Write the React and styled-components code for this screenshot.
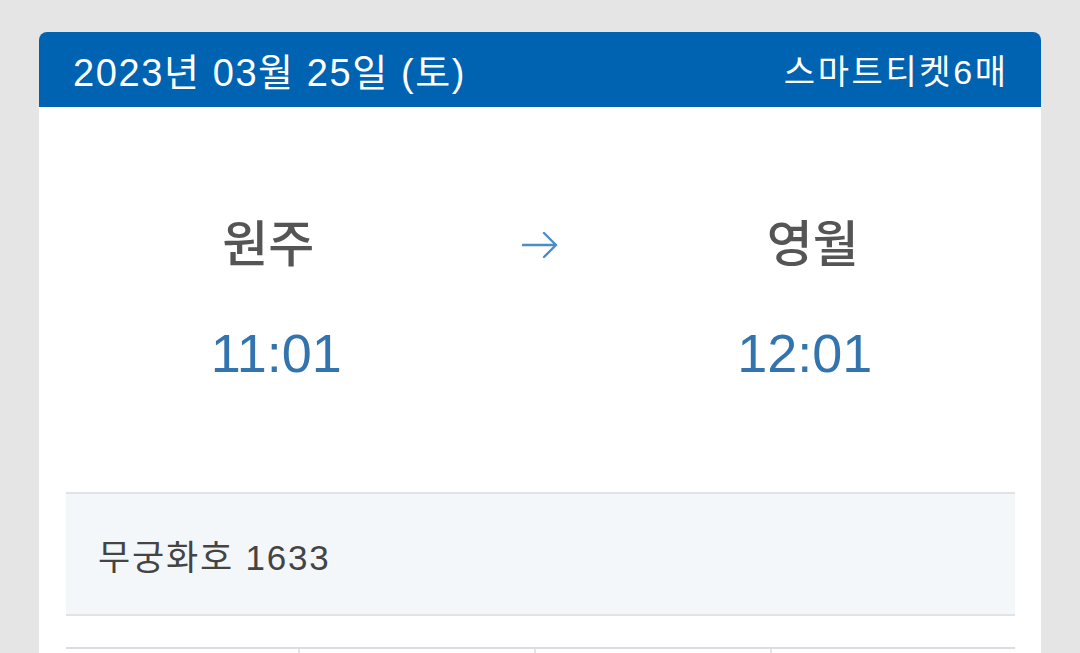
import React from 'react';
import styled, { createGlobalStyle } from 'styled-components';

const GlobalStyle = createGlobalStyle`
  html, body {
    margin: 0;
    padding: 0;
    background: #e5e5e5;
  }
  body {
    font-family: "Liberation Sans", "Noto Sans CJK KR", sans-serif;
  }
`;

const Page = styled.div`
  padding: 32px 39px 0 39px;
  height: 653px;
  box-sizing: border-box;
  overflow: hidden;
`;

const Card = styled.div`
  background: #ffffff;
  border-radius: 8px 8px 0 0;
  overflow: hidden;
  min-height: 640px;
`;

const Header = styled.div`
  height: 75px;
  background: #0063b2;
  color: #ffffff;
  display: flex;
  align-items: center;
  justify-content: space-between;
  padding: 0 35px 0 34px;
`;

const DateText = styled.div`
  font-size: 38px;
  letter-spacing: 1.6px;
`;

const TicketCount = styled.div`
  font-size: 34px;
  letter-spacing: 2.6px;
  margin-right: -2.6px;
`;

const Route = styled.div`
  display: grid;
  grid-template-columns: 1fr 140px 1fr;
  padding: 108px 26px 0 27px;
`;

const Stop = styled.div`
  display: flex;
  flex-direction: column;
  align-items: center;
`;

const StationName = styled.div`
  font-size: 50px;
  line-height: 60px;
  color: #555555;
  font-weight: 500;
`;

const Time = styled.div`
  margin-top: 48px;
  font-size: 54px;
  line-height: 60px;
  color: #3474ae;
  transform: translateX(${(p) => p.$nudge || 0}px);
`;

const ArrowCell = styled.div`
  display: flex;
  justify-content: center;
  height: 60px;
  align-items: center;
  padding-right: 2px;
`;

const TrainPanel = styled.div`
  margin: 109px 26px 0 27px;
  height: 120px;
  background: #f4f7fa;
  border-top: 2px solid #e1e3e7;
  border-bottom: 2px solid #e1e3e7;
  display: flex;
  align-items: center;
  padding-left: 32px;
  font-size: 35px;
  letter-spacing: 1.8px;
  color: #444444;
`;

const SeatRow = styled.div`
  margin: 31px 26px 0 27px;
  border-top: 2px solid #dcdde2;
  display: grid;
  grid-template-columns: 232px 236px 236px 1fr;
  height: 40px;
`;

const SeatCell = styled.div`
  border-left: ${(p) => (p.$first ? 'none' : '2px solid #e3e4e8')};
`;

const Arrow = () => (
  <svg width="38" height="28" viewBox="0 0 38 28" fill="none">
    <path
      d="M2 14 H35 M23 2 L35 14 L23 26"
      stroke="#4a8dc9"
      strokeWidth="2.4"
      strokeLinecap="round"
      strokeLinejoin="round"
    />
  </svg>
);

export default function App() {
  return (
    <>
      <GlobalStyle />
      <Page>
        <Card>
          <Header>
            <DateText>2023년 03월 25일 (토)</DateText>
            <TicketCount>스마트티켓6매</TicketCount>
          </Header>
          <Route>
            <Stop>
              <StationName>원주</StationName>
              <Time $nudge={8}>11:01</Time>
            </Stop>
            <ArrowCell>
              <Arrow />
            </ArrowCell>
            <Stop>
              <StationName>영월</StationName>
              <Time $nudge={-8}>12:01</Time>
            </Stop>
          </Route>
          <TrainPanel>무궁화호 1633</TrainPanel>
          <SeatRow>
            <SeatCell $first />
            <SeatCell />
            <SeatCell />
            <SeatCell />
          </SeatRow>
        </Card>
      </Page>
    </>
  );
}
